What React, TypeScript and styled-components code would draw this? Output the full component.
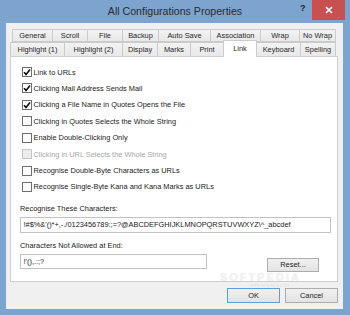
import React from "react";
import styled, { createGlobalStyle, css } from "styled-components";

const GlobalStyle = createGlobalStyle`
  html, body { margin: 0; padding: 0; width: 350px; height: 315px; overflow: hidden; }
  body { font-family: "Liberation Sans", Arial, sans-serif; font-size: 7.4px; color: #222; }
  * { box-sizing: border-box; }
`;

const Window = styled.div`
  position: relative;
  width: 350px;
  height: 315px;
  background: #7da3cf;
  display: flex;
  flex-direction: column;
`;

const TitleBar = styled.div`
  height: 23px;
  display: grid;
  grid-template-columns: 1fr auto 1fr;
  align-items: start;
`;

const Title = styled.div`
  grid-column: 2;
  font-size: 10.6px;
  color: #2b2b2b;
  line-height: 22px;
`;

const Controls = styled.div`
  grid-column: 3;
  justify-self: end;
  display: flex;
  align-items: flex-start;
  padding-right: 5px;
`;

const Help = styled.div`
  font-size: 9px;
  font-weight: bold;
  color: #1f1f1f;
  width: 12px;
  line-height: 16px;
`;

const Close = styled.div`
  width: 33px;
  height: 20px;
  background: #c75050;
  color: #fff;
  display: flex;
  align-items: center;
  justify-content: center;
`;

const Client = styled.div`
  flex: 1;
  margin: 0 7px 6px 6px;
  background: #f0f0f0;
  padding: 6px 5px 0 4px;
  display: flex;
  flex-direction: column;
`;

const TabRow = styled.div<{ $indent: number; $h: number }>`
  display: flex;
  padding-left: ${(p) => p.$indent}px;
  height: ${(p) => p.$h}px;
  position: relative;
`;

const Tab = styled.div<{ $w: number; $sel?: boolean; $front?: boolean }>`
  width: ${(p) => p.$w}px;
  height: 100%;
  border: 1px solid #cbcbcb;
  border-right: none;
  ${(p) => (p.$front ? "border-bottom: none;" : "")}
  &:last-child { border-right: 1px solid #cbcbcb; }
  background: linear-gradient(#f3f3f3, #e8e8e8);
  display: flex;
  align-items: center;
  justify-content: center;
  white-space: nowrap;
  color: #262626;
  ${(p) =>
    p.$sel &&
    css`
      background: #fff;
      height: calc(100% + 3px);
      margin-top: -2px;
      margin-bottom: -1px;
      border-right: 1px solid #cbcbcb;
      z-index: 2;
      position: relative;
      align-items: flex-start;
      padding-top: 3px;
      & + div { border-left: none; }
    `}
`;

const Panel = styled.div`
  height: 226px;
  width: 328px;
  background: #fff;
  border: 1px solid #cfcfcf;
  padding: 6.8px 6px 0 9px;
  display: flex;
  flex-direction: column;
`;

const CheckRow = styled.div<{ $disabled?: boolean }>`
  height: 16.43px;
  display: flex;
  align-items: center;
  margin-left: 2px;
  gap: 1.5px;
  color: ${(p) => (p.$disabled ? "#a6a6a6" : "#222")};
  white-space: nowrap;
`;

const Box = styled.div<{ $disabled?: boolean }>`
  width: 10px;
  height: 10px;
  border: 1px solid ${(p) => (p.$disabled ? "#c4c4c4" : "#6e6e6e")};
  background: ${(p) => (p.$disabled ? "#ececec" : "#fff")};
  display: flex;
  align-items: center;
  justify-content: center;
`;

const FieldLabel = styled.div<{ $mt: number }>`
  margin-top: ${(p) => p.$mt}px;
  line-height: 12px;
  white-space: nowrap;
`;

const TextBox = styled.div<{ $w: number; $h: number }>`
  width: ${(p) => p.$w}px;
  height: ${(p) => p.$h}px;
  border: 1px solid #c3c3c3;
  background: #fff;
  padding-left: 2.5px;
  display: flex;
  align-items: center;
  white-space: nowrap;
  overflow: hidden;
  color: #222;
`;

const FieldRow = styled.div`
  margin-top: 2px;
  display: flex;
  align-items: flex-start;
`;

const Button = styled.div<{ $default?: boolean; $w: number }>`
  width: ${(p) => p.$w}px;
  height: ${(p) => (p.$default ? 15 : 14)}px;
  border: 1px solid ${(p) => (p.$default ? "#5b9fe0" : "#adadad")};
  background: linear-gradient(#f0f0f0, #e3e3e3);
  display: flex;
  align-items: center;
  justify-content: center;
  color: #222;
`;

const ResetButton = styled(Button)`
  margin-left: auto;
  margin-right: 12px;
  margin-top: 4px;
`;

const ButtonRow = styled.div`
  display: flex;
  justify-content: flex-end;
  gap: 5px;
  margin-top: 6px;
`;

const CancelButton = styled(Button)`
  height: 15px;
`;

const Watermark = styled.div`
  position: absolute;
  left: 220px;
  top: 273px;
  font-size: 11px;
  line-height: 9px;
  font-weight: bold;
  letter-spacing: 2px;
  color: rgba(255, 255, 255, 0.6);
  text-shadow: 0 0 1px rgba(0, 0, 0, 0.14);
  pointer-events: none;
`;

const WatermarkUrl = styled.div`
  position: absolute;
  left: 250px;
  top: 284px;
  font-size: 4.5px;
  line-height: 4px;
  color: rgba(0, 0, 0, 0.12);
  pointer-events: none;
`;

const Check = () => (
  <svg width="8" height="8" viewBox="0 0 8 8">
    <path d="M1 4.2 L3 6.4 L7 1.4" fill="none" stroke="#111" strokeWidth="1.6" />
  </svg>
);

const row1 = [
  ["General", 40],
  ["Scroll", 35],
  ["File", 35],
  ["Backup", 36],
  ["Auto Save", 52],
  ["Association", 50],
  ["Wrap", 39],
  ["No Wrap", 37],
] as const;

const row2 = [
  ["Highlight (1)", 54],
  ["Highlight (2)", 58],
  ["Display", 35],
  ["Marks", 33],
  ["Print", 33],
  ["Link", 34],
  ["Keyboard", 43],
  ["Spelling", 36],
] as const;

const checks: { label: string; checked?: boolean; disabled?: boolean }[] = [
  { label: "Link to URLs", checked: true },
  { label: "Clicking Mail Address Sends Mail", checked: true },
  { label: "Clicking a File Name in Quotes Opens the File", checked: true },
  { label: "Clicking in Quotes Selects the Whole String" },
  { label: "Enable Double-Clicking Only" },
  { label: "Clicking in URL Selects the Whole String", disabled: true },
  { label: "Recognise Double-Byte Characters as URLs" },
  { label: "Recognise Single-Byte Kana and Kana Marks as URLs" },
];

export default function App() {
  return (
    <>
      <GlobalStyle />
      <Window>
        <TitleBar>
          <Title>All Configurations Properties</Title>
          <Controls>
            <Help>?</Help>
            <Close>
              <svg width="8" height="8" viewBox="0 0 8 8">
                <path d="M1 1 L7 7 M7 1 L1 7" stroke="#fff" strokeWidth="1.6" />
              </svg>
            </Close>
          </Controls>
        </TitleBar>
        <Client>
          <TabRow $indent={2} $h={13}>
            {row1.map(([t, w]) => (
              <Tab key={t} $w={w}>
                {t}
              </Tab>
            ))}
          </TabRow>
          <TabRow $indent={0} $h={14}>
            {row2.map(([t, w]) => (
              <Tab key={t} $w={w} $front $sel={t === "Link"}>
                {t}
              </Tab>
            ))}
          </TabRow>
          <Panel>
            {checks.map((c) => (
              <CheckRow key={c.label} $disabled={c.disabled}>
                <Box $disabled={c.disabled}>{c.checked && <Check />}</Box>
                {c.label}
              </CheckRow>
            ))}
            <FieldLabel $mt={7.8}>Recognise These Characters:</FieldLabel>
            <FieldRow>
              <TextBox $w={311} $h={16}>
                {"!#$%&'()*+,-./0123456789:;=?@ABCDEFGHIJKLMNOPQRSTUVWXYZ\\^_abcdef"}
              </TextBox>
            </FieldRow>
            <FieldLabel $mt={7}>Characters Not Allowed at End:</FieldLabel>
            <FieldRow>
              <TextBox $w={187} $h={15}>
                {"!'(),.:;?"}
              </TextBox>
              <ResetButton $w={52}>Reset...</ResetButton>
            </FieldRow>
          </Panel>
          <ButtonRow>
            <Button $default $w={53}>
              OK
            </Button>
            <CancelButton $w={53}>Cancel</CancelButton>
          </ButtonRow>
        </Client>
        <Watermark>SOFTPEDIA</Watermark>
        <WatermarkUrl>www.softpedia.com</WatermarkUrl>
      </Window>
    </>
  );
}
